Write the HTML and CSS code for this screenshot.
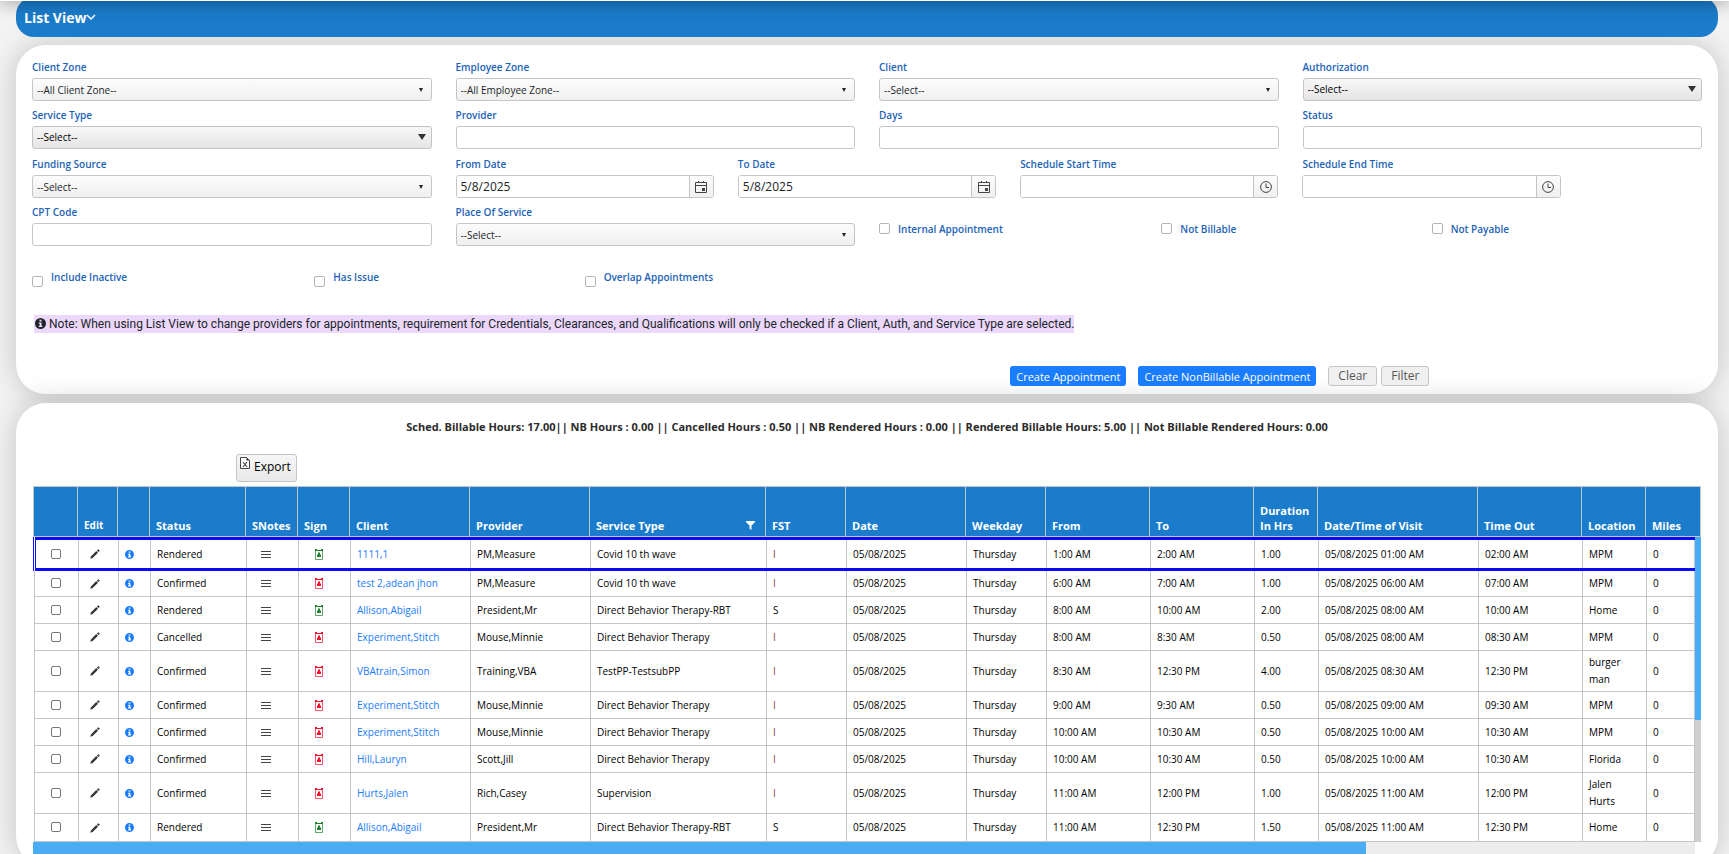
FILE: index.html
```html
<!DOCTYPE html>
<html lang="en">
    <head>
        <meta charset="utf-8">
        <title>List View</title>
        <meta name="viewport" content="width=device-width, initial-scale=1.0">
        <link rel="stylesheet" href="styles.css">
    </head>
    <body>

        <!-- shared icons -->
        <svg class="sprite" aria-hidden="true">
            <symbol id="calendar" viewBox="0 0 12 12">
                <path d="M.5 1.5h11v10H.5zM.5 4.5h11M3.5 0v2M8.5 0v2" fill="none" stroke="currentColor"/>
                <path d="M7 7h3v3H7z" fill="currentColor"/>
            </symbol>
            <symbol id="clock" viewBox="0 0 12 12">
                <circle cx="6" cy="6" r="5.4" fill="none" stroke="currentColor"/>
                <path d="M6 2.5v4h3" fill="none" stroke="currentColor"/>
            </symbol>
            <symbol id="pencil" viewBox="0 0 10 10">
                <path d="M.3 9.700l.6-2.300L6.300 2l1.700 1.700-5.400 5.400zM6.900 1.400l1-1q.3-.3.6 0l1.100 1.100q.3.3 0 .6l-1 1z" fill="currentColor"/>
            </symbol>
            <symbol id="info" viewBox="0 0 16 16">
                <path fill-rule="evenodd" d="M8 0a8 8 0 1 0 0 16A8 8 0 0 0 8 0zM6.5 2.5h3v2.6h-3zM5.5 6.5h4v4.7h1.2v2h-5.2v-2h1.3V8.5H5.500z" fill="currentColor"/>
            </symbol>
            <symbol id="notes" viewBox="0 0 10 9">
                <path d="M0 1.500h10M0 4.500h10M0 7.500h10" stroke="currentColor" fill="none"/>
            </symbol>
            <symbol id="sign" viewBox="0 0 8 11">
                <path d="M.5 1v9.500h7V1" fill="none" stroke="currentColor" stroke-opacity=".7"/>
                <path d="M0 0h2v1h4V0h2v2H0z" fill="currentColor"/>
                <path d="M3 3.500h2v2h1v2.500H2V5.500h1z" fill="currentColor"/>
            </symbol>
        </svg>

        <div class="navEdge"></div>

        <h1 class="titleBar">List View<svg class="chevron" viewBox="0 0 10 10"><path d="M1 3l4 4 4-4" fill="none" stroke="currentColor" stroke-width="1.500"/></svg></h1>

        <form class="panel filters">
            <div class="row">
                <div class="col3">
                    <label for="clientZone">Client Zone</label>
                    <div class="drop"><select id="clientZone"><option>--All Client Zone--</option></select></div>
                </div>
                <div class="col3">
                    <label for="employeeZone">Employee Zone</label>
                    <div class="drop"><select id="employeeZone"><option>--All Employee Zone--</option></select></div>
                </div>
                <div class="col3">
                    <label for="client">Client</label>
                    <div class="drop"><select id="client"><option>--Select--</option></select></div>
                </div>
                <div class="col3">
                    <label for="auth">Authorization</label>
                    <div class="drop dark"><select id="auth"><option>--Select--</option></select></div>
                </div>
            </div>

            <div class="row spaced">
                <div class="col3">
                    <label for="serviceType">Service Type</label>
                    <div class="drop dark"><select id="serviceType"><option>--Select--</option></select></div>
                </div>
                <div class="col3">
                    <label for="provider">Provider</label>
                    <input class="box" type="text" id="provider">
                </div>
                <div class="col3">
                    <label for="days">Days</label>
                    <input class="box" type="text" id="days">
                </div>
                <div class="col3">
                    <label for="status">Status</label>
                    <input class="box" type="text" id="status">
                </div>
            </div>

            <div class="row">
                <div class="col3">
                    <label for="funding">Funding Source</label>
                    <div class="drop"><select id="funding"><option>--Select--</option></select></div>
                </div>
                <div class="col2">
                    <label for="fromDate">From Date</label>
                    <div class="picker">
                        <input type="text" id="fromDate" value="5/8/2025">
                        <button type="button" aria-label="Open calendar"><svg><use href="#calendar"/></svg></button>
                    </div>
                </div>
                <div class="col2">
                    <label for="toDate">To Date</label>
                    <div class="picker">
                        <input type="text" id="toDate" value="5/8/2025">
                        <button type="button" aria-label="Open calendar"><svg><use href="#calendar"/></svg></button>
                    </div>
                </div>
                <div class="col2">
                    <label for="startTime">Schedule Start Time</label>
                    <div class="picker">
                        <input type="text" id="startTime">
                        <button type="button" aria-label="Pick a time"><svg><use href="#clock"/></svg></button>
                    </div>
                </div>
                <div class="col2">
                    <label for="endTime">Schedule End Time</label>
                    <div class="picker">
                        <input type="text" id="endTime">
                        <button type="button" aria-label="Pick a time"><svg><use href="#clock"/></svg></button>
                    </div>
                </div>
            </div>

            <div class="row">
                <div class="col3">
                    <label for="cpt">CPT Code</label>
                    <input class="box" type="text" id="cpt">
                </div>
                <div class="col3">
                    <label for="place">Place Of Service</label>
                    <div class="drop"><select id="place"><option>--Select--</option></select></div>
                </div>
                <div class="col2 check middle"><input type="checkbox" id="internal"><label for="internal">Internal Appointment</label></div>
                <div class="col2 check middle"><input type="checkbox" id="notBillable"><label for="notBillable">Not Billable</label></div>
                <div class="col2 check middle flush"><input type="checkbox" id="notPayable"><label for="notPayable">Not Payable</label></div>
            </div>

            <div class="row flags">
                <div class="col2 check"><input type="checkbox" id="inactive"><label for="inactive">Include Inactive</label></div>
                <div class="col2 check"><input type="checkbox" id="hasIssue"><label for="hasIssue">Has Issue</label></div>
                <div class="col2 check flush"><input type="checkbox" id="overlap"><label for="overlap">Overlap Appointments</label></div>
            </div>

            <p class="note"><span><svg><use href="#info"/></svg> Note: When using List View to change providers for appointments, requirement for Credentials, Clearances, and Qualifications will only be checked if a Client, Auth, and Service Type are selected.</span></p>

            <div class="actions">
                <button type="button" class="btn primary">Create Appointment</button>
                <button type="button" class="btn primary">Create NonBillable Appointment</button>
                <button type="button" class="btn">Clear</button>
                <button type="button" class="btn">Filter</button>
            </div>
        </form>

        <div class="panel results">
            <p class="summary">Sched. Billable Hours: 17.00|| NB Hours : 0.00 || Cancelled Hours : 0.50 || NB Rendered Hours : 0.00 || Rendered Billable Hours: 5.00 || Not Billable Rendered Hours: 0.00</p>

            <button type="button" class="export">
                <svg viewBox="0 0 10 12"><path d="M.5.500h6l3 3v8h-9z" fill="#fff" stroke="#444"/><path d="M6.500.500v3h3z" fill="#333"/><path d="M3 5l4 5M7 5l-4 5" stroke="#444" stroke-width="1.200"/></svg>
                Export
            </button>

            <div class="grid">
                <table class="gridHead">
                    <colgroup>
                        <col class="w44"><col class="w40"><col class="w32"><col class="w96"><col class="w52"><col class="w52"><col class="w120"><col class="w120"><col class="w176"><col class="w80"><col class="w120"><col class="w80"><col class="w104"><col class="w104"><col class="w64"><col class="w160"><col class="w104"><col class="w64"><col>
                    </colgroup>
                    <thead>
                        <tr>
                            <th></th>
                            <th class="small">Edit</th>
                            <th></th>
                            <th>Status</th>
                            <th>SNotes</th>
                            <th>Sign</th>
                            <th>Client</th>
                            <th>Provider</th>
                            <th><div class="filterable">Service Type<svg viewBox="0 0 9 9"><path d="M0 0h9v1L5.500 4.500V9l-2-1.500v-3L0 1z" fill="currentColor"/></svg></div></th>
                            <th>FST</th>
                            <th>Date</th>
                            <th>Weekday</th>
                            <th>From</th>
                            <th>To</th>
                            <th>Duration In Hrs</th>
                            <th>Date/Time of Visit</th>
                            <th>Time Out</th>
                            <th>Location</th>
                            <th>Miles</th>
                        </tr>
                    </thead>
                </table>

                <div class="gridMiddle">
                    <table class="gridBody">
                        <colgroup>
                            <col class="w44"><col class="w40"><col class="w32"><col class="w96"><col class="w52"><col class="w52"><col class="w120"><col class="w120"><col class="w176"><col class="w80"><col class="w120"><col class="w80"><col class="w104"><col class="w104"><col class="w64"><col class="w160"><col class="w104"><col class="w64"><col>
                        </colgroup>
                        <tbody>
                            <tr class="selected">
                                <td class="pick"><input type="checkbox" aria-label="Select row"></td>
                                <td class="edit"><svg><use href="#pencil"/></svg></td>
                                <td class="info"><svg><use href="#info"/></svg></td>
                                <td>Rendered</td>
                                <td class="notes"><svg><use href="#notes"/></svg></td>
                                <td class="sign green"><svg><use href="#sign"/></svg></td>
                                <td><a href="#">1111,1</a></td>
                                <td>PM,Measure</td>
                                <td>Covid 10 th wave</td>
                                <td class="brown">I</td>
                                <td>05/08/2025</td>
                                <td>Thursday</td>
                                <td>1:00 AM</td>
                                <td>2:00 AM</td>
                                <td>1.00</td>
                                <td>05/08/2025 01:00 AM</td>
                                <td>02:00 AM</td>
                                <td>MPM</td>
                                <td>0</td>
                            </tr>
                            <tr>
                                <td class="pick"><input type="checkbox" aria-label="Select row"></td>
                                <td class="edit"><svg><use href="#pencil"/></svg></td>
                                <td class="info"><svg><use href="#info"/></svg></td>
                                <td>Confirmed</td>
                                <td class="notes"><svg><use href="#notes"/></svg></td>
                                <td class="sign red"><svg><use href="#sign"/></svg></td>
                                <td><a href="#">test 2,adean jhon</a></td>
                                <td>PM,Measure</td>
                                <td>Covid 10 th wave</td>
                                <td class="brown">I</td>
                                <td>05/08/2025</td>
                                <td>Thursday</td>
                                <td>6:00 AM</td>
                                <td>7:00 AM</td>
                                <td>1.00</td>
                                <td>05/08/2025 06:00 AM</td>
                                <td>07:00 AM</td>
                                <td>MPM</td>
                                <td>0</td>
                            </tr>
                            <tr>
                                <td class="pick"><input type="checkbox" aria-label="Select row"></td>
                                <td class="edit"><svg><use href="#pencil"/></svg></td>
                                <td class="info"><svg><use href="#info"/></svg></td>
                                <td>Rendered</td>
                                <td class="notes"><svg><use href="#notes"/></svg></td>
                                <td class="sign green"><svg><use href="#sign"/></svg></td>
                                <td><a href="#">Allison,Abigail</a></td>
                                <td>President,Mr</td>
                                <td>Direct Behavior Therapy-RBT</td>
                                <td>S</td>
                                <td>05/08/2025</td>
                                <td>Thursday</td>
                                <td>8:00 AM</td>
                                <td>10:00 AM</td>
                                <td>2.00</td>
                                <td>05/08/2025 08:00 AM</td>
                                <td>10:00 AM</td>
                                <td>Home</td>
                                <td>0</td>
                            </tr>
                            <tr>
                                <td class="pick"><input type="checkbox" aria-label="Select row"></td>
                                <td class="edit"><svg><use href="#pencil"/></svg></td>
                                <td class="info"><svg><use href="#info"/></svg></td>
                                <td>Cancelled</td>
                                <td class="notes"><svg><use href="#notes"/></svg></td>
                                <td class="sign red"><svg><use href="#sign"/></svg></td>
                                <td><a href="#">Experiment,Stitch</a></td>
                                <td>Mouse,Minnie</td>
                                <td>Direct Behavior Therapy</td>
                                <td class="brown">I</td>
                                <td>05/08/2025</td>
                                <td>Thursday</td>
                                <td>8:00 AM</td>
                                <td>8:30 AM</td>
                                <td>0.50</td>
                                <td>05/08/2025 08:00 AM</td>
                                <td>08:30 AM</td>
                                <td>MPM</td>
                                <td>0</td>
                            </tr>
                            <tr>
                                <td class="pick"><input type="checkbox" aria-label="Select row"></td>
                                <td class="edit"><svg><use href="#pencil"/></svg></td>
                                <td class="info"><svg><use href="#info"/></svg></td>
                                <td>Confirmed</td>
                                <td class="notes"><svg><use href="#notes"/></svg></td>
                                <td class="sign red"><svg><use href="#sign"/></svg></td>
                                <td><a href="#">VBAtrain,Simon</a></td>
                                <td>Training,VBA</td>
                                <td>TestPP-TestsubPP</td>
                                <td class="brown">I</td>
                                <td>05/08/2025</td>
                                <td>Thursday</td>
                                <td>8:30 AM</td>
                                <td>12:30 PM</td>
                                <td>4.00</td>
                                <td>05/08/2025 08:30 AM</td>
                                <td>12:30 PM</td>
                                <td>burger man</td>
                                <td>0</td>
                            </tr>
                            <tr>
                                <td class="pick"><input type="checkbox" aria-label="Select row"></td>
                                <td class="edit"><svg><use href="#pencil"/></svg></td>
                                <td class="info"><svg><use href="#info"/></svg></td>
                                <td>Confirmed</td>
                                <td class="notes"><svg><use href="#notes"/></svg></td>
                                <td class="sign red"><svg><use href="#sign"/></svg></td>
                                <td><a href="#">Experiment,Stitch</a></td>
                                <td>Mouse,Minnie</td>
                                <td>Direct Behavior Therapy</td>
                                <td class="brown">I</td>
                                <td>05/08/2025</td>
                                <td>Thursday</td>
                                <td>9:00 AM</td>
                                <td>9:30 AM</td>
                                <td>0.50</td>
                                <td>05/08/2025 09:00 AM</td>
                                <td>09:30 AM</td>
                                <td>MPM</td>
                                <td>0</td>
                            </tr>
                            <tr>
                                <td class="pick"><input type="checkbox" aria-label="Select row"></td>
                                <td class="edit"><svg><use href="#pencil"/></svg></td>
                                <td class="info"><svg><use href="#info"/></svg></td>
                                <td>Confirmed</td>
                                <td class="notes"><svg><use href="#notes"/></svg></td>
                                <td class="sign red"><svg><use href="#sign"/></svg></td>
                                <td><a href="#">Experiment,Stitch</a></td>
                                <td>Mouse,Minnie</td>
                                <td>Direct Behavior Therapy</td>
                                <td class="brown">I</td>
                                <td>05/08/2025</td>
                                <td>Thursday</td>
                                <td>10:00 AM</td>
                                <td>10:30 AM</td>
                                <td>0.50</td>
                                <td>05/08/2025 10:00 AM</td>
                                <td>10:30 AM</td>
                                <td>MPM</td>
                                <td>0</td>
                            </tr>
                            <tr>
                                <td class="pick"><input type="checkbox" aria-label="Select row"></td>
                                <td class="edit"><svg><use href="#pencil"/></svg></td>
                                <td class="info"><svg><use href="#info"/></svg></td>
                                <td>Confirmed</td>
                                <td class="notes"><svg><use href="#notes"/></svg></td>
                                <td class="sign red"><svg><use href="#sign"/></svg></td>
                                <td><a href="#">Hill,Lauryn</a></td>
                                <td>Scott,Jill</td>
                                <td>Direct Behavior Therapy</td>
                                <td class="brown">I</td>
                                <td>05/08/2025</td>
                                <td>Thursday</td>
                                <td>10:00 AM</td>
                                <td>10:30 AM</td>
                                <td>0.50</td>
                                <td>05/08/2025 10:00 AM</td>
                                <td>10:30 AM</td>
                                <td>Florida</td>
                                <td>0</td>
                            </tr>
                            <tr>
                                <td class="pick"><input type="checkbox" aria-label="Select row"></td>
                                <td class="edit"><svg><use href="#pencil"/></svg></td>
                                <td class="info"><svg><use href="#info"/></svg></td>
                                <td>Confirmed</td>
                                <td class="notes"><svg><use href="#notes"/></svg></td>
                                <td class="sign red"><svg><use href="#sign"/></svg></td>
                                <td><a href="#">Hurts,Jalen</a></td>
                                <td>Rich,Casey</td>
                                <td>Supervision</td>
                                <td class="brown">I</td>
                                <td>05/08/2025</td>
                                <td>Thursday</td>
                                <td>11:00 AM</td>
                                <td>12:00 PM</td>
                                <td>1.00</td>
                                <td>05/08/2025 11:00 AM</td>
                                <td>12:00 PM</td>
                                <td>Jalen Hurts</td>
                                <td>0</td>
                            </tr>
                            <tr>
                                <td class="pick"><input type="checkbox" aria-label="Select row"></td>
                                <td class="edit"><svg><use href="#pencil"/></svg></td>
                                <td class="info"><svg><use href="#info"/></svg></td>
                                <td>Rendered</td>
                                <td class="notes"><svg><use href="#notes"/></svg></td>
                                <td class="sign green"><svg><use href="#sign"/></svg></td>
                                <td><a href="#">Allison,Abigail</a></td>
                                <td>President,Mr</td>
                                <td>Direct Behavior Therapy-RBT</td>
                                <td>S</td>
                                <td>05/08/2025</td>
                                <td>Thursday</td>
                                <td>11:00 AM</td>
                                <td>12:30 PM</td>
                                <td>1.50</td>
                                <td>05/08/2025 11:00 AM</td>
                                <td>12:30 PM</td>
                                <td>Home</td>
                                <td>0</td>
                            </tr>
                        </tbody>
                    </table>
                    <div class="scrollY"><div class="thumb"></div></div>
                </div>
                <div class="scrollX"><div class="thumb"></div></div>
            </div>
        </div>
    </body>
</html>
```

FILE: styles.css
```css
*{
    margin: 0;
    padding: 0;
    box-sizing: border-box;
}

body{
    display: flow-root;
    height: 100vh;
    overflow: hidden;
    background-color: #f3f3f3;
    color: #212529;
    font-family: "Open Sans", "Noto Sans", sans-serif;
    font-size: 12px;
}

input, select, button{
    font-family: inherit;
    color: inherit;
}

.sprite{
    display: none;
}

/* bottom edge of the fixed nav bar */
.navEdge{
    position: relative;
    z-index: 2;
    height: 40px;
    margin-top: -39px;
    background-color: #fff;
    box-shadow: 0 0 20px rgba(0, 0, 0, 0.4);
}

.titleBar{
    position: relative;
    z-index: 1;
    display: flex;
    align-items: center;
    height: 40px;
    margin: -4px 11px 8px 16px;
    padding-left: 8px;
    border-radius: 18px;
    background-color: #1b7ccb;
    color: #fff;
    font-size: 14px;
}

.chevron{
    width: 10px;
    height: 10px;
}

.panel{
    margin: 0 11px 9px 16px;
    border-radius: 30px;
    background-color: #fff;
    box-shadow: 0 0 30px rgba(0, 0, 0, 0.2);
}

/* filters */
.filters{
    padding: 11px 4px 8px;
}

.row{
    display: flex;
    padding-bottom: 3px;
}

.row.spaced{
    padding-bottom: 4px;
}

.col3{
    width: 25%;
    padding: 0 12px;
}

.col2{
    width: 16.666%;
    padding: 0 12px;
}

.filters label{
    display: block;
    color: #1c63b7;
    font-size: 10px;
    font-weight: 600;
    line-height: 22px;
}

.drop{
    position: relative;
}

.drop::after{
    content: "";
    position: absolute;
    top: 10px;
    right: 9px;
    border: 2px solid transparent;
    border-top: 4px solid #222;
    border-bottom: none;
    pointer-events: none;
}

.drop.dark::after{
    border-width: 6px 4px 0;
    top: 8px;
    right: 6px;
    border-top-color: #333;
}

.drop select, .box, .picker{
    display: block;
    width: 100%;
    height: 23px;
    border: 1px solid #c5c5c5;
    border-radius: 3px;
    background-color: #fff;
}

.drop select{
    appearance: none;
    padding: 0 4px;
    background-image: linear-gradient(#fcfcfc, #f0f0f0);
    font-size: 10px;
}

.drop.dark select{
    padding-bottom: 2px;
    background-image: linear-gradient(#f8f7f8, #e6e4e5);
    color: #000;
}

.picker{
    display: flex;
    overflow: hidden;
}

.picker input{
    flex: 1;
    min-width: 0;
    padding-left: 4px;
    border: none;
    font-size: 12px;
}

.picker button{
    display: flex;
    align-items: center;
    justify-content: center;
    width: 24px;
    border: none;
    border-left: 1px solid #c5c5c5;
    background-image: linear-gradient(#fcfcfc, #f0f0f0);
    color: #444;
}

.picker svg{
    width: 12px;
    height: 12px;
}

.check{
    display: flex;
    gap: 8px;
}

.check input, .pick input{
    appearance: none;
    width: 11px;
    height: 11px;
    border: 1px solid #b5b5b5;
    border-radius: 2px;
    background-color: #fff;
}

.check input{
    margin-top: 10px;
}

.middle{
    align-items: center;
    padding-top: 10px;
}

.middle input{
    margin-top: 0;
}

.flush{
    padding-left: 0;
}

.flags{
    padding: 17px 0 0;
}

.note{
    margin: 27px 14px 33px;
    font-family: Roboto, "Open Sans", sans-serif;
    font-size: 12px;
    line-height: 18px;
}

.note span{
    display: inline-block;
    padding-left: 1px;
    background-color: #ecd8fb;
}

.note svg{
    width: 11px;
    height: 11px;
    vertical-align: -1px;
}

.actions{
    display: flex;
    justify-content: flex-end;
    gap: 4px;
    padding-right: 16.8%;
}

.btn{
    height: 20px;
    padding: 0 9px;
    border: 1px solid #c5c5c5;
    border-radius: 3px;
    background-color: #f0f0f0;
    color: #555;
    font-size: 12px;
    line-height: 18px;
}

.btn.primary{
    margin-right: 8px;
    padding: 1px 6px 0;
    border: none;
    background-color: #1a7cff;
    color: #fff;
    font-size: 11px;
}

/* results */
.results{
    padding: 12px 17px 8px;
}

.summary{
    font-size: 11px;
    font-weight: bold;
    line-height: 24px;
    text-align: center;
    color: #2b2b2b;
}

.export{
    display: flex;
    gap: 4px;
    height: 28px;
    margin: 15px 0 4px 203px;
    padding: 2px 5px 0 3px;
    border: 1px solid #c5c5c5;
    border-radius: 3px;
    background-image: linear-gradient(#f6f6f6, #e8e8e8);
    color: #000;
    font-size: 12px;
    line-height: 20px;
}

.export svg{
    width: 10px;
    height: 12px;
}

table{
    width: 100%;
    table-layout: fixed;
    border-collapse: collapse;
}

.w32{ width: 32px; }
.w40{ width: 40px; }
.w44{ width: 44px; }
.w52{ width: 52px; }
.w64{ width: 64px; }
.w80{ width: 80px; }
.w96{ width: 96px; }
.w104{ width: 104px; }
.w120{ width: 120px; }
.w160{ width: 160px; }
.w176{ width: 176px; }

th{
    height: 50px;
    padding: 0 6px 3px;
    border: 1px solid #c5c5c5;
    background-color: #1b7ccb;
    color: #fff;
    font-size: 11px;
    line-height: 15px;
    text-align: left;
    vertical-align: bottom;
}

th.small{
    font-size: 10px;
}

.filterable{
    display: flex;
    align-items: center;
    justify-content: space-between;
    padding-right: 4px;
}

.filterable svg{
    width: 9px;
    height: 9px;
}

.gridMiddle{
    display: flex;
}

.gridBody{
    flex: 1;
    width: 0;
}

td{
    height: 27px;
    padding: 3px 10px 3px 6px;
    border: 1px solid #c5c5c5;
    color: #000;
    font-size: 10px;
    line-height: 17px;
}

td svg{
    display: block;
    width: 10px;
    height: 10px;
}

td a{
    color: #1a7cff;
    text-decoration: none;
}

.selected td{
    height: 31px;
    border-top: 3px solid #0a0aff;
    border-bottom: 3px solid #0a0aff;
}

.selected td:first-child{
    border-left: 3px double #0a0aff;
}

tr:last-child td{
    height: 28px;
}

td.pick{
    padding: 0 2px 2px 0;
    text-align: center;
}

.pick input{
    display: inline-block;
    width: 10px;
    height: 10px;
    border-color: #777;
    vertical-align: middle;
}

td.edit{
    padding-left: 11px;
    color: #333;
}

td.info{
    color: #1a7cff;
}

td.info svg{
    width: 9px;
    height: 9px;
}

td.notes{
    padding-left: 14px;
    color: #444;
}

td.notes svg{
    height: 9px;
}

td.sign{
    padding-left: 16px;
}

td.sign svg{
    width: 8px;
    height: 11px;
}

td.green{
    color: #1f8030;
}

td.red{
    color: #f5102c;
}

td.brown{
    color: #8a4a2a;
}

.scrollY{
    width: 6px;
    background-color: #d0d0d0;
}

.scrollY .thumb{
    height: 60%;
    background-color: #4aacf2;
}

.scrollX{
    height: 16px;
    margin-right: 6px;
    background-color: #ededed;
}

.scrollX .thumb{
    width: 80.2%;
    height: 100%;
    background-color: #4aacf2;
}
```
